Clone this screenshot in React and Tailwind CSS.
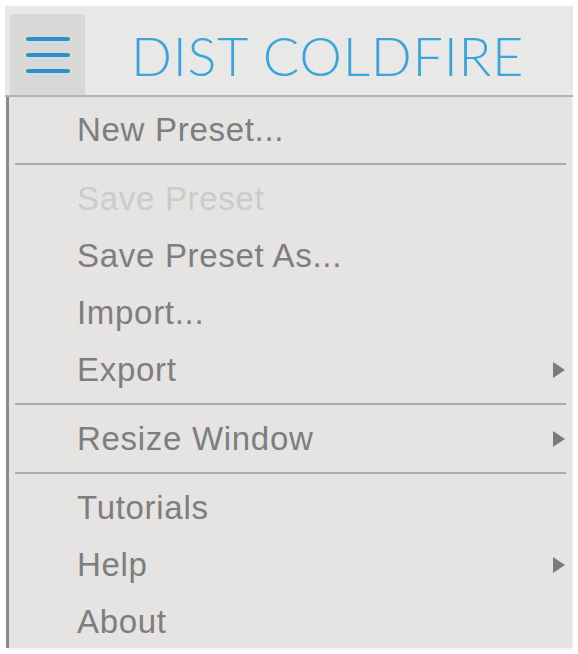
const sections = [
  [{ label: "New Preset..." }],
  [
    { label: "Save Preset", disabled: true },
    { label: "Save Preset As..." },
    { label: "Import..." },
    { label: "Export", sub: true },
  ],
  [{ label: "Resize Window", sub: true }],
  [{ label: "Tutorials" }, { label: "Help", sub: true }, { label: "About" }],
];

function Arrow() {
  return (
    <svg width="12" height="16" viewBox="0 0 12 16" className="shrink-0">
      <path d="M0 0 L12 8 L0 16 Z" fill="#7b7b7b" />
    </svg>
  );
}

function MenuRow({ item }) {
  return (
    <div className="flex items-center justify-between h-[57px] pl-[68px] pr-[7px]">
      <span
        className={
          "text-[33px] tracking-[0.7px] " +
          (item.disabled ? "text-[#cbcbca]" : "text-[#7e7e7e]")
        }
      >
        {item.label}
      </span>
      {item.sub && <Arrow />}
    </div>
  );
}

export default function App() {
  return (
    <div className="w-[578px] h-[654px] bg-white pt-[6px] font-['Liberation_Sans',Arial,sans-serif]">
      <div className="mx-[5px] h-[91px] bg-[#e8e8e6] flex items-stretch border-b-2 border-[#b3b3b1]">
        <div className="ml-[5px] mt-[8px] w-[75px] bg-[#d8d8d6] rounded-t-[3px] flex flex-col justify-center items-center gap-[12px]">
          <div className="w-[44px] h-[4px] rounded-full bg-[#2b90cf]" />
          <div className="w-[44px] h-[4px] rounded-full bg-[#2b90cf]" />
          <div className="w-[44px] h-[4px] rounded-full bg-[#2b90cf]" />
        </div>
        <div className="flex items-center pl-[46px] pt-[10px]">
          <span className="font-['Lato',sans-serif] font-light text-[54px] tracking-[0.7px] text-[#3aa5dc]">
            DIST COLDFIRE
          </span>
        </div>
      </div>
      <div className="ml-[6px] mr-[6px] h-[551px] bg-[#e5e4e2] border-l-[3px] border-[#8a8a8a] shadow-[1px_1px_2px_rgba(0,0,0,0.08)] pt-[4px]">
        {sections.map((sec, i) => (
          <div key={i}>
            {i > 0 && (
              <div className="mx-[6px] h-[2px] bg-[#ababab] my-[5px]" />
            )}
            {sec.map((item) => (
              <MenuRow key={item.label} item={item} />
            ))}
          </div>
        ))}
      </div>
    </div>
  );
}
